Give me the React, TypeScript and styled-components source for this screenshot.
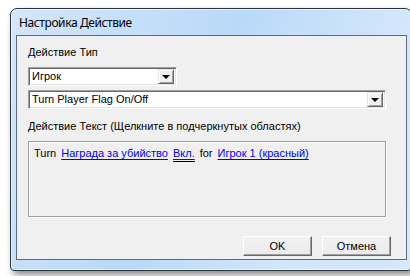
import styled, { createGlobalStyle } from "styled-components";

const Global = createGlobalStyle`
    html, body {
        margin: 0;
        padding: 0;
        background: #ffffff;
    }
    body {
        width: 410px;
        height: 276px;
        overflow: hidden;
    }
`;

const Page = styled.div`
    padding: 8px 0 0 10px;
`;

const Window = styled.div`
    width: 390px;
    height: 256px;
    border: 1px solid #2b3440;
    border-radius: 7px 7px 4px 4px;
    background: linear-gradient(115deg, #d4e6fa 0%, #b9d9f8 45%, #d2e6fb 75%, #d6e8fb 100%);
    box-shadow: 3px 4px 7px rgba(0, 0, 0, 0.45), inset 0 0 0 1px rgba(255, 255, 255, 0.6);
    display: flex;
    flex-direction: column;
    padding: 0 5px 5px 5px;
    box-sizing: content-box;
`;

const TitleBar = styled.div`
    height: 26px;
    display: flex;
    align-items: center;
    padding-left: 3px;
    font-family: "Noto Sans", sans-serif;
    font-size: 12px;
    letter-spacing: -0.4px;
    color: #000;
`;

const Client = styled.div`
    width: 378px;
    height: 223px;
    border: 1px solid #5d6b7a;
    background: #f0f0f0;
    display: flex;
    flex-direction: column;
    padding: 0 0 0 11px;
    box-sizing: content-box;
    font-family: "Liberation Sans", Arial, sans-serif;
    font-size: 11px;
    color: #000;
`;

const Label = styled.div<{ $top: number }>`
    margin-top: ${p => p.$top}px;
    height: 13px;
    line-height: 13px;
`;

const Combo = styled.div<{ $width: number; $top: number }>`
    width: ${p => p.$width}px;
    height: 19px;
    margin-top: ${p => p.$top}px;
    box-sizing: border-box;
    background: #fff;
    border-top: 1px solid #a0a0a0;
    border-left: 1px solid #a0a0a0;
    border-right: 1px solid #ffffff;
    border-bottom: 1px solid #ffffff;
    box-shadow: inset 1px 1px 0 #696969, inset -1px -1px 0 #e3e3e3;
    display: flex;
    align-items: center;
    padding: 0 2px 0 3px;
`;

const ComboText = styled.span`
    flex: 1;
    line-height: 13px;
`;

const DropButton = styled.div`
    width: 16px;
    height: 15px;
    box-sizing: border-box;
    background: #f0f0f0;
    border-top: 1px solid #e3e3e3;
    border-left: 1px solid #e3e3e3;
    border-right: 1px solid #696969;
    border-bottom: 1px solid #696969;
    box-shadow: inset 1px 1px 0 #ffffff, inset -1px -1px 0 #a0a0a0;
    display: flex;
    align-items: center;
    justify-content: center;
`;

const Arrow = styled.div`
    width: 0;
    height: 0;
    border-left: 4px solid transparent;
    border-right: 4px solid transparent;
    border-top: 4px solid #000;
    margin-top: 1px;
`;

const Panel = styled.div`
    width: 358px;
    height: 76px;
    margin-top: 8px;
    box-sizing: border-box;
    border: 1px solid #a0a0a0;
    box-shadow: 1px 1px 0 #ffffff, inset 1px 1px 0 #ffffff;
    padding: 4px 0 0 5px;
    display: flex;
    align-items: baseline;
    gap: 5px;
    line-height: 14px;
`;

const Link = styled.span<{ $double?: boolean }>`
    color: #0000ff;
    text-decoration: underline;
    text-underline-offset: 2px;
    ${p => p.$double && `
        padding-bottom: 1px;
        border-bottom: 1px solid #000;
    `}
`;

const Buttons = styled.div`
    display: flex;
    gap: 10px;
    margin-top: auto;
    margin-bottom: 3px;
    padding-left: 215px;
`;

const Button = styled.div`
    width: 69px;
    height: 20px;
    box-sizing: border-box;
    background: linear-gradient(#f2f2f2, #ebebeb);
    border-top: 1px solid #ffffff;
    border-left: 1px solid #ffffff;
    border-right: 1px solid #696969;
    border-bottom: 1px solid #696969;
    box-shadow: inset -1px -1px 0 #a0a0a0;
    display: flex;
    align-items: center;
    justify-content: center;
`;

export default function App() {
    return (
        <Page>
            <Global />
            <Window>
                <TitleBar>Настройка Действие</TitleBar>
                <Client>
                    <Label $top={10}>Действие Тип</Label>
                    <Combo $width={149} $top={8}>
                        <ComboText>Игрок</ComboText>
                        <DropButton><Arrow /></DropButton>
                    </Combo>
                    <Combo $width={358} $top={4}>
                        <ComboText>Turn Player Flag On/Off</ComboText>
                        <DropButton><Arrow /></DropButton>
                    </Combo>
                    <Label $top={11}>Действие Текст (Щелкните в подчеркнутых областях)</Label>
                    <Panel>
                        <span>Turn</span>
                        <Link>Награда за убийство</Link>
                        <Link $double>Вкл.</Link>
                        <span>for</span>
                        <Link>Игрок 1 (красный)</Link>
                    </Panel>
                    <Buttons>
                        <Button>OK</Button>
                        <Button>Отмена</Button>
                    </Buttons>
                </Client>
            </Window>
        </Page>
    );
}
